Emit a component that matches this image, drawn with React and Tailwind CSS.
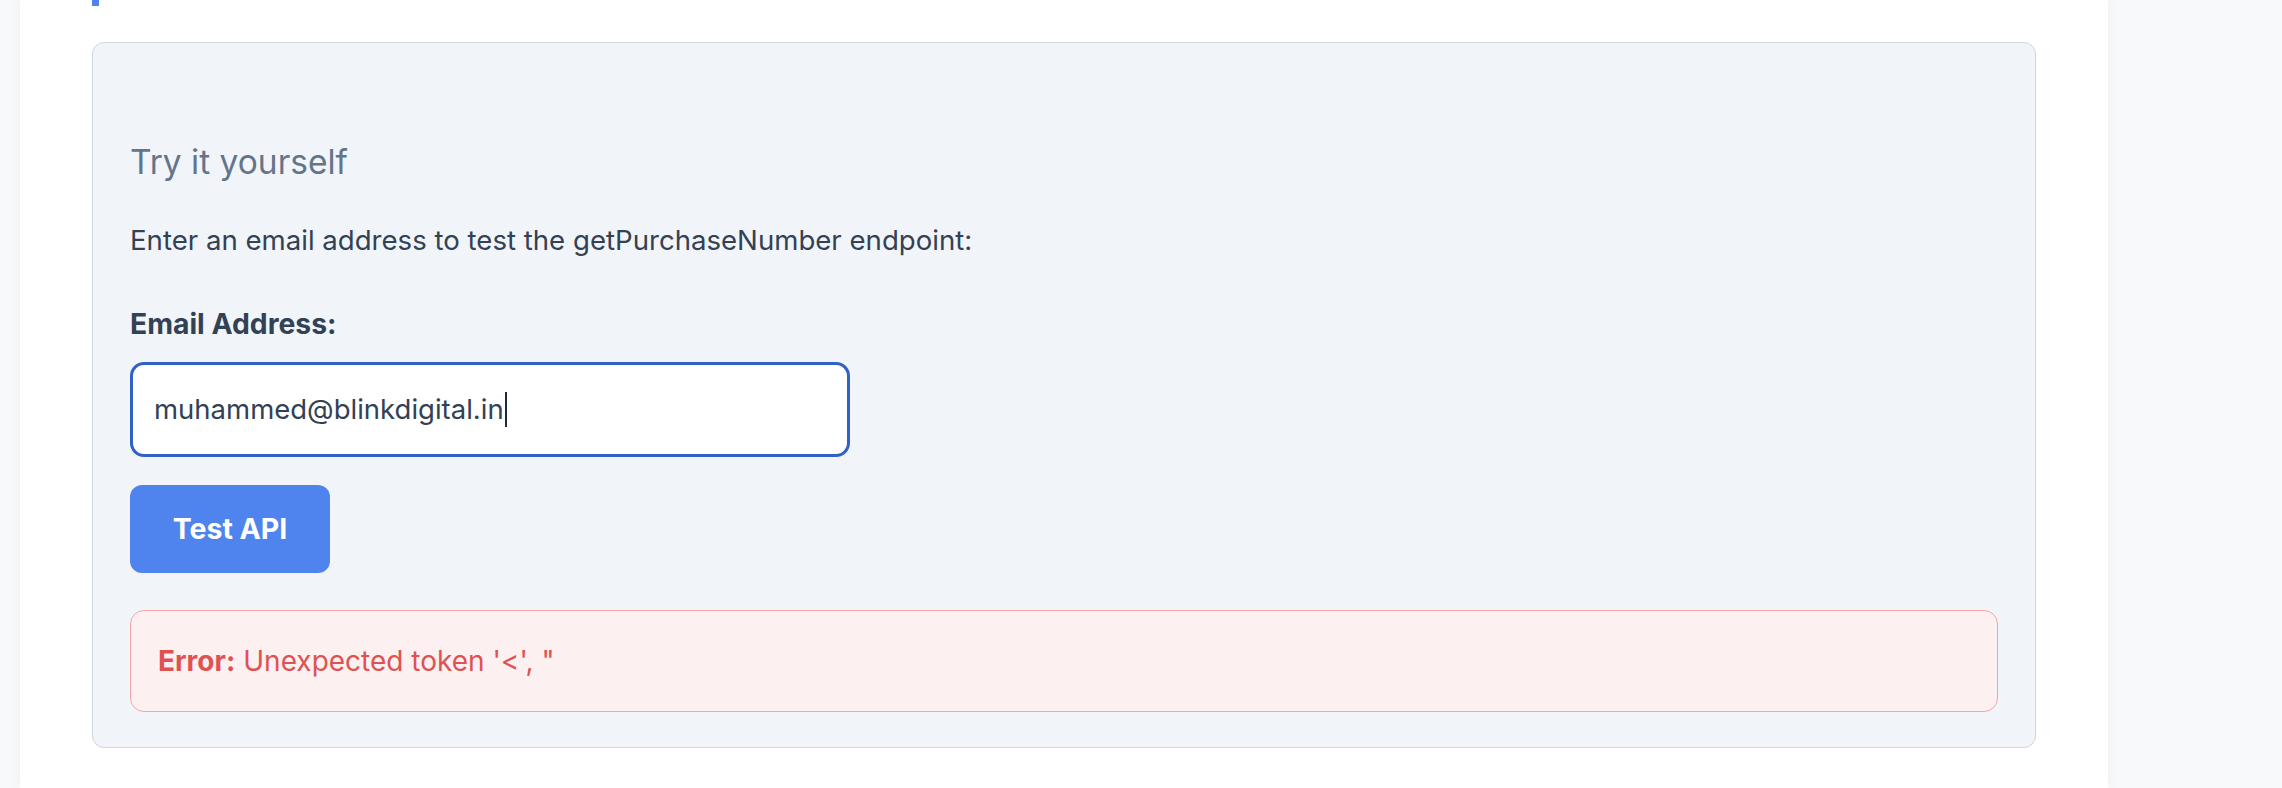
import { useState } from 'react';

const TryItPanel = () => {
  const [email] = useState('muhammed@blinkdigital.in');
  const [error] = useState("Unexpected token '<', \"");

  return (
    <div className="rounded-[12px] border border-[#cfd7e2] bg-[#f1f5f9] px-[37px] pt-[98px] pb-[35px]">
      <h3 className="text-[33.5px] leading-[42px] font-normal text-[#64748b]">Try it yourself</h3>

      <p className="mt-[37px] text-[27.6px] leading-[40px] text-[#334155]">
        Enter an email address to test the getPurchaseNumber endpoint:
      </p>

      <label className="mt-[44px] block text-[28.3px] leading-[40px] font-bold text-[#334155]">
        Email Address:
      </label>

      <div className="mt-[18px] flex h-[95px] w-[720px] items-center rounded-[14px] border-[3px] border-[#2f62c6] bg-white pl-[21px] text-[27.5px] text-[#334155]">
        <span>{email}</span>
        <span className="ml-[1px] inline-block h-[35px] w-[2px] bg-[#1e293b]" />
      </div>

      <button className="mt-[28px] flex h-[88px] w-[200px] items-center justify-center rounded-[12px] bg-[#4f83ee] text-[28.5px] font-bold text-white">
        Test API
      </button>

      <div className="mt-[37px] flex h-[102px] items-center rounded-[14px] border border-[#f2a7a7] bg-[#fcf0f0] px-[27px] text-[28px] text-[#e05252]">
        <strong className="font-bold">Error:</strong>
        <span className="ml-[8px]">{error}</span>
      </div>
    </div>
  );
};

const App = () => {
  return (
    <div className="flex min-h-[788px] bg-[#f8f9fb]" style={{ fontFamily: 'Inter, "Noto Sans", sans-serif' }}>
      <div className="w-[20px] shrink-0" />
      <main className="w-[2088px] shrink-0 bg-white px-[72px] shadow-[0_0_14px_rgba(15,23,42,0.05)]">
        <div className="h-[6px] w-[7px] bg-[#4f83ee]" />
        <div className="mt-[36px]">
          <TryItPanel />
        </div>
      </main>
      <div className="flex-1" />
    </div>
  );
};

export default App;
